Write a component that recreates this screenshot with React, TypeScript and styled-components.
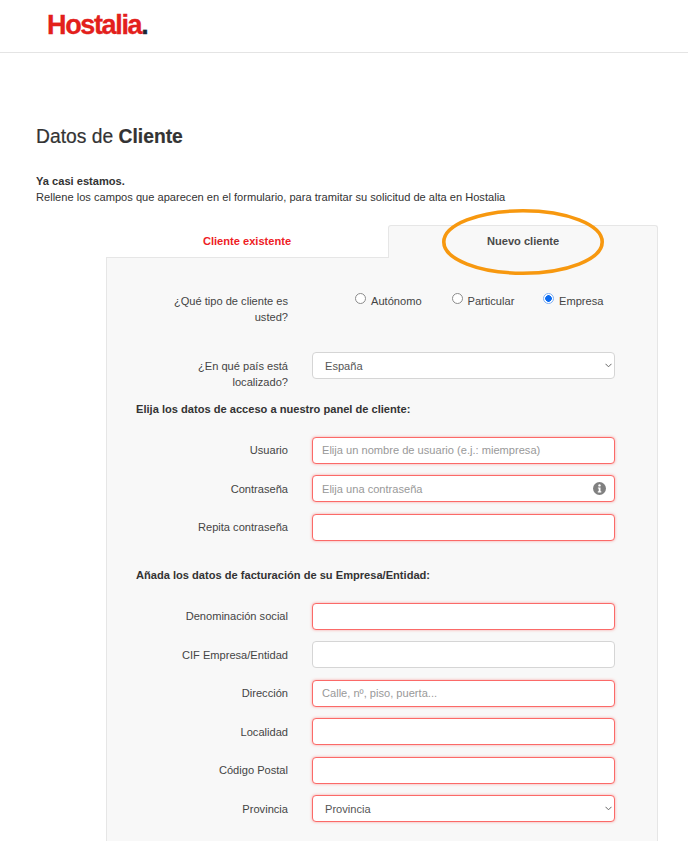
import React from 'react';
import styled, { createGlobalStyle } from 'styled-components';

const GlobalStyle = createGlobalStyle`
  html, body {
    margin: 0;
    padding: 0;
    height: 841px;
    overflow: hidden;
    background: #fff;
    font-family: "Liberation Sans", Arial, sans-serif;
    color: #333;
  }
  * { box-sizing: border-box; }
`;

const Header = styled.header`
  height: 53px;
  padding: 10px 0 0 47px;
  border-bottom: 1px solid #e4e4e4;
`;

const Logo = styled.div`
  font-size: 27px;
  line-height: 30px;
  font-weight: 700;
  letter-spacing: -1.35px;
  color: #e3201b;
  -webkit-text-stroke: 0.3px #e3201b;
  span { color: #1d2733; -webkit-text-stroke: 0.3px #1d2733; }
`;

const Main = styled.main`
  position: relative;
  padding: 72px 30px 0 36px;
`;

const Title = styled.h1`
  margin: 0;
  font-size: 19.3px;
  line-height: 24px;
  font-weight: 400;
  color: #333;
  -webkit-text-stroke: 0.2px #333;
  b { font-weight: 700; }
`;

const Intro = styled.p`
  margin: 25px 0 0;
  font-size: 11.1px;
  line-height: 15.5px;
  color: #333;
  b { display: block; font-weight: 700; }
`;

const FormBox = styled.section`
  margin: 20px 0 0 70px;
`;

const Tabs = styled.div`
  display: grid;
  grid-template-columns: 282px 1fr;
  height: 33px;
`;

const Tab = styled.div<{ $active?: boolean }>`
  display: flex;
  align-items: center;
  justify-content: center;
  padding-bottom: ${p => (p.$active ? '3px' : '0')};
  font-size: 11.1px;
  font-weight: 700;
  color: ${p => (p.$active ? '#4a4a4a' : '#ee2025')};
  background: ${p => (p.$active ? '#f8f8f8' : '#fff')};
  border: 1px solid #e6e6e6;
  border-width: ${p => (p.$active ? '1px 1px 0 1px' : '0 0 1px 0')};
  border-radius: ${p => (p.$active ? '3px 3px 0 0' : '0')};
`;

const Panel = styled.div`
  height: 600px;
  padding: 35px 41px 0 29px;
  background: #f8f8f8;
  border: 1px solid #e6e6e6;
  border-top: 0;
`;

const Row = styled.div<{ $gap?: number }>`
  display: grid;
  grid-template-columns: 152px 303px;
  column-gap: 24px;
  align-items: center;
  margin-bottom: ${p => p.$gap ?? 11.5}px;
`;

const Label = styled.label`
  font-size: 11.1px;
  line-height: 16px;
  color: #444;
  text-align: right;
`;

// the two question labels wrap onto two lines and start at the top of the row
const QuestionLabel = styled(Label)<{ $offset: number }>`
  justify-self: end;
  align-self: start;
  max-width: 125px;
  padding-top: ${p => p.$offset}px;
`;

const RadioGroup = styled.div`
  display: flex;
  align-self: start;
  padding-left: 43px;
`;

const RadioLabel = styled.label<{ $width: number }>`
  display: flex;
  width: ${p => p.$width}px;
  font-size: 11.1px;
  line-height: 16px;
  color: #444;
`;

const Radio = styled.input.attrs({ type: 'radio', name: 'tipo' })`
  appearance: none;
  width: 11px;
  height: 11px;
  margin: 0 5px 0 0;
  flex: none;
  background: #fff;
  border: 1px solid #8c8c8c;
  border-radius: 50%;
  &:checked {
    border-color: #7fb0f5;
    background: radial-gradient(circle, #0b6bf0 0 3px, #fff 3.6px);
  }
`;

const fieldCss = `
  display: block;
  width: 100%;
  height: 27px;
  font-family: inherit;
  font-size: 11.1px;
  color: #555;
  background: #fff;
  border-radius: 4px;
  outline: 0;
`;

const Input = styled.input<{ $invalid?: boolean }>`
  ${fieldCss}
  padding: 0 9px;
  border: 1px solid ${p => (p.$invalid ? '#fb6a68' : '#d5d5d5')};
  box-shadow: ${p => (p.$invalid ? '0 0 3px rgba(251, 106, 104, 0.6)' : 'none')};
  &::placeholder { color: #999; opacity: 1; }
`;

const SelectBox = styled.div<{ $top?: boolean }>`
  position: relative;
  align-self: ${p => (p.$top ? 'start' : 'center')};
`;

const Select = styled.select<{ $invalid?: boolean }>`
  ${fieldCss}
  padding: 0 12px;
  appearance: none;
  border: 1px solid ${p => (p.$invalid ? '#fb6a68' : '#d5d5d5')};
  box-shadow: ${p => (p.$invalid ? '0 0 3px rgba(251, 106, 104, 0.6)' : 'none')};
`;

const Chevron = styled.svg`
  position: absolute;
  right: 3px;
  top: 11px;
  width: 7px;
  height: 5px;
  pointer-events: none;
`;

const InputBox = styled.div`
  position: relative;
`;

const InfoIcon = styled.svg`
  position: absolute;
  right: 9px;
  top: 7px;
  width: 13px;
  height: 13px;
`;

const SectionTitle = styled.h2<{ $top: number; $bottom: number }>`
  margin: ${p => p.$top}px 0 ${p => p.$bottom}px;
  font-size: 11.1px;
  line-height: 16px;
  font-weight: 700;
  color: #333;
`;

const Highlight = styled.svg`
  position: absolute;
  left: 442px;
  top: 156px;
  width: 162px;
  height: 66px;
  pointer-events: none;
`;

const Arrow = () => (
  <Chevron viewBox="0 0 7 5" fill="none">
    <path d="M0.5 0.8 L3.5 3.8 L6.5 0.8" stroke="#666" strokeWidth="1" />
  </Chevron>
);

const App: React.FC = () => {
  return (
    <>
      <GlobalStyle />
      <Header>
        <Logo>Hostalia<span>.</span></Logo>
      </Header>
      <Main>
        <Title>Datos de <b>Cliente</b></Title>
        <Intro>
          <b>Ya casi estamos.</b>
          Rellene los campos que aparecen en el formulario, para tramitar su solicitud de alta en Hostalia
        </Intro>
        <FormBox>
          <Tabs>
            <Tab>Cliente existente</Tab>
            <Tab $active>Nuevo cliente</Tab>
          </Tabs>
          <Panel>
            <Row $gap={27}>
              <QuestionLabel $offset={0}>¿Qué tipo de cliente es usted?</QuestionLabel>
              <RadioGroup>
                <RadioLabel $width={96.5}><Radio />Autónomo</RadioLabel>
                <RadioLabel $width={91.5}><Radio />Particular</RadioLabel>
                <RadioLabel $width={60}><Radio defaultChecked />Empresa</RadioLabel>
              </RadioGroup>
            </Row>
            <Row $gap={11}>
              <QuestionLabel $offset={6}>¿En qué país está localizado?</QuestionLabel>
              <SelectBox $top>
                <Select defaultValue="España"><option>España</option></Select>
                <Arrow />
              </SelectBox>
            </Row>
            <SectionTitle $top={0} $bottom={19.5}>Elija los datos de acceso a nuestro panel de cliente:</SectionTitle>
            <Row>
              <Label>Usuario</Label>
              <Input $invalid placeholder="Elija un nombre de usuario (e.j.: miempresa)" />
            </Row>
            <Row>
              <Label>Contraseña</Label>
              <InputBox>
                <Input $invalid placeholder="Elija una contraseña" />
                <InfoIcon viewBox="0 0 13 13">
                  <circle cx="6.5" cy="6.5" r="6.5" fill="#808080" />
                  <circle cx="6.5" cy="3.4" r="1.2" fill="#fff" />
                  <path d="M4.9 5.4h2.6v3.9h0.8v1.1H4.8V9.3h0.9V6.5h-0.8z" fill="#fff" />
                </InfoIcon>
              </InputBox>
            </Row>
            <Row>
              <Label>Repita contraseña</Label>
              <Input $invalid />
            </Row>
            <SectionTitle $top={26.5} $bottom={19.5}>Añada los datos de facturación de su Empresa/Entidad:</SectionTitle>
            <Row>
              <Label>Denominación social</Label>
              <Input $invalid />
            </Row>
            <Row>
              <Label>CIF Empresa/Entidad</Label>
              <Input />
            </Row>
            <Row>
              <Label>Dirección</Label>
              <Input $invalid placeholder="Calle, nº, piso, puerta..." />
            </Row>
            <Row>
              <Label>Localidad</Label>
              <Input $invalid />
            </Row>
            <Row>
              <Label>Código Postal</Label>
              <Input $invalid />
            </Row>
            <Row>
              <Label>Provincia</Label>
              <SelectBox>
                <Select $invalid defaultValue="Provincia"><option>Provincia</option></Select>
                <Arrow />
              </SelectBox>
            </Row>
          </Panel>
        </FormBox>
        <Highlight viewBox="0 0 162 66" fill="none">
          <ellipse cx="81" cy="33" rx="79.2" ry="31.2" stroke="#f7980f" strokeWidth="3.6" />
        </Highlight>
      </Main>
    </>
  );
};

export default App;
